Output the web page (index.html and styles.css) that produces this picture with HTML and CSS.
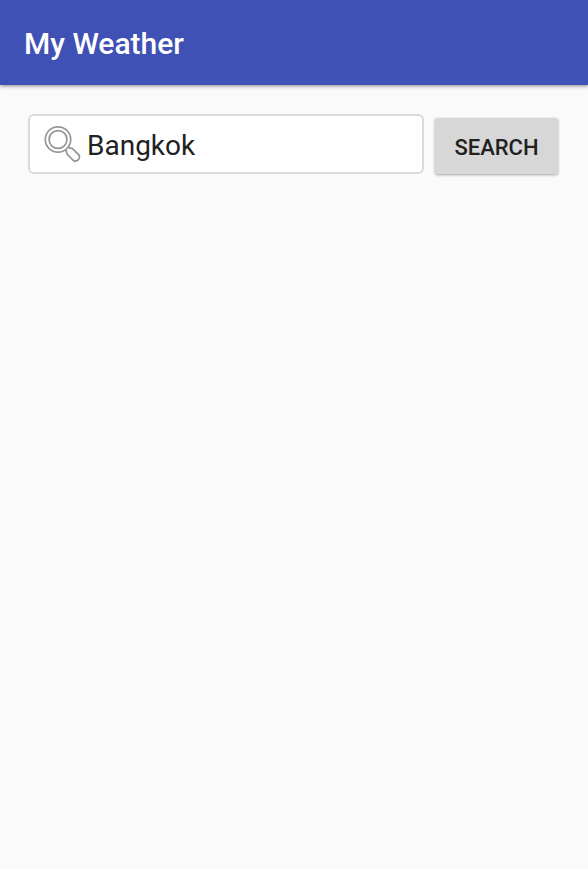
FILE: index.html
```html
<!DOCTYPE html>
<html lang="en">
<head>
  <meta charset="utf-8">
  <meta name="viewport" content="width=device-width, initial-scale=1">
  <title>My Weather</title>
  <link rel="stylesheet" href="styles.css">
</head>
<body>
  <header class="app-bar">
    <h1 class="app-title">My Weather</h1>
  </header>
  <main>
    <form class="search-form">
      <label class="search-field">
        <svg class="search-icon" viewBox="0 0 38 38" aria-hidden="true">
          <circle cx="14" cy="14.500" r="12.700"/>
          <circle cx="14" cy="14.500" r="8.900"/>
          <path d="M21 25l1.600 1.400q-.3 1.800 .8 3l5.400 5.600q2.400 2.200 4.900 .3t1.500-5l-6.200-6.200q-1.400-1.300-3.200-.8L24.200 21.700"/>
        </svg>
        <input class="search-input" type="text" value="Bangkok" aria-label="City">
      </label>
      <button class="search-button" type="button">SEARCH</button>
    </form>
  </main>
</body>
</html>
```

FILE: styles.css
```css
* {
  box-sizing: border-box;
}

body {
  margin: 0;
  background: #fafafa;
  color: #212121;
  font-family: Roboto, sans-serif;
}

.app-bar {
  display: flex;
  align-items: center;
  height: 85px;
  padding: 2px 24px 0;
  background: #3f51b5;
  box-shadow: 0 1px 4px rgba(0, 0, 0, 0.45);
}

.app-title {
  margin: 0;
  color: #fff;
  font-size: 30px;
  font-weight: 500;
}

.search-form {
  display: flex;
  align-items: flex-end;
  gap: 11px;
  padding: 29px 30px 4px 28px;
}

.search-field {
  display: flex;
  flex: 1;
  align-items: center;
  gap: 5px;
  min-width: 0;
  height: 60px;
  padding: 0 14px;
  border: 2px solid #dadada;
  border-radius: 6px;
  background: #fff;
}

.search-icon {
  flex: none;
  width: 38px;
  height: 38px;
  fill: none;
  stroke: #959595;
  stroke-width: 1.7;
}

.search-input {
  flex: 1;
  min-width: 0;
  padding: 4px 0 0;
  border: 0;
  outline: 0;
  background: none;
  color: #212121;
  font: 400 28px/36px Roboto, sans-serif;
}

.search-button {
  width: 123px;
  height: 56px;
  padding: 4px 0 0;
  border: 0;
  border-radius: 3px;
  background: #d7d7d7;
  box-shadow: 0 1px 3px rgba(0, 0, 0, 0.35);
  color: #212121;
  font: 500 22px/28px Roboto, sans-serif;
}
```
